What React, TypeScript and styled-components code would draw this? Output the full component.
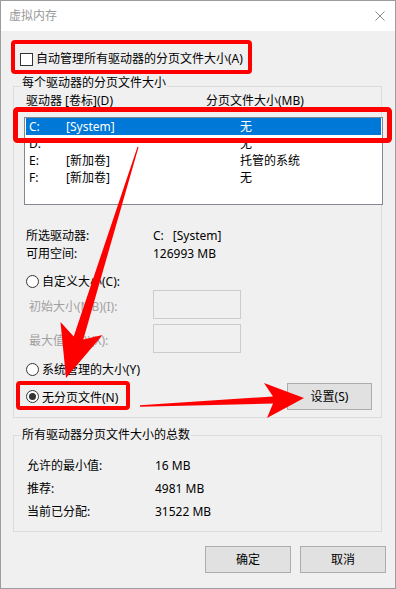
import React from "react";
import styled, { createGlobalStyle } from "styled-components";

const Global = createGlobalStyle`
  html, body { margin: 0; padding: 0; background: #ffffff; }
  body {
    font-family: "Noto Sans", "Noto Sans CJK SC", sans-serif;
    font-size: 12px;
    color: #000;
  }
  * { box-sizing: border-box; }
`;

const Window = styled.div`
  position: relative;
  width: 396px;
  height: 589px;
  border: 1px solid #9c9c9c;
  display: flex;
  flex-direction: column;
  background: #f0f0f0;
  overflow: hidden;
`;

const TitleBar = styled.div`
  flex: none;
  height: 30px;
  background: #ffffff;
  display: flex;
  align-items: center;
  justify-content: space-between;
  padding: 0 10px 0 8px;
`;

const Title = styled.span`
  color: #999999;
  line-height: 16px;
`;

const CloseIcon = styled.svg`
  display: block;
  width: 10px;
  height: 10px;
  margin-bottom: 1px;
`;

const Body = styled.div`
  flex: 1;
  display: flex;
  flex-direction: column;
  padding: 0 13px 0 12px;
`;

const CheckRow = styled.label`
  margin-top: 20px;
  height: 16px;
  padding-left: 7px;
  display: flex;
  align-items: center;
  gap: 3px;
  line-height: 16px;
`;

const CheckBox = styled.span`
  flex: none;
  width: 13px;
  height: 13px;
  border: 1px solid #333333;
  background: #ffffff;
`;

const Group = styled.div<{ $mt: number; $pt: number; $pb: number }>`
  position: relative;
  margin-top: ${(p) => p.$mt}px;
  padding-top: ${(p) => p.$pt}px;
  padding-bottom: ${(p) => p.$pb}px;
  border: 1px solid #dcdcdc;
  display: flex;
  flex-direction: column;
`;

const Legend = styled.span<{ $lift: number }>`
  position: absolute;
  left: 7px;
  top: -${(p) => p.$lift}px;
  padding: 0 1px;
  line-height: 16px;
  background: #f0f0f0;
  white-space: nowrap;
`;

const HeaderRow = styled.div`
  margin-top: 6px;
  padding-left: 12px;
  height: 16px;
  line-height: 16px;
  display: grid;
  grid-template-columns: 180px 1fr;
`;

const ListBox = styled.div`
  margin: 8px -2px 0 10px;
  height: 88px;
  border: 1px solid #828790;
  background: #ffffff;
  padding: 0 1px;
  display: flex;
  flex-direction: column;
`;

const ListRow = styled.div<{ $selected?: boolean }>`
  height: 17px;
  line-height: 17px;
  padding-left: 3px;
  display: grid;
  grid-template-columns: 37px 174px 1fr;
  white-space: nowrap;
  background: ${(p) => (p.$selected ? "#0078d7" : "transparent")};
  color: ${(p) => (p.$selected ? "#ffffff" : "#000000")};
`;

const InfoGrid = styled.div<{ $mt: number; $pl: number; $label: number; $row: number }>`
  margin-top: ${(p) => p.$mt}px;
  padding-left: ${(p) => p.$pl}px;
  display: grid;
  grid-template-columns: ${(p) => p.$label}px 1fr;
  grid-auto-rows: ${(p) => p.$row}px;
  line-height: ${(p) => p.$row}px;
  white-space: nowrap;
`;

const Spaced = styled.span`
  margin-left: 9px;
`;

const RadioRow = styled.label<{ $mt: number }>`
  margin-top: ${(p) => p.$mt}px;
  padding-left: 12px;
  height: 17px;
  line-height: 17px;
  display: flex;
  align-items: center;
  gap: 3px;
  white-space: nowrap;
`;

const Radio = styled.span<{ $checked?: boolean }>`
  flex: none;
  width: 13px;
  height: 13px;
  border-radius: 50%;
  border: 1px solid #333333;
  background: #ffffff;
  display: flex;
  align-items: center;
  justify-content: center;
  &::after {
    content: "";
    width: 7px;
    height: 7px;
    border-radius: 50%;
    background: ${(p) => (p.$checked ? "#333333" : "transparent")};
  }
`;

const FieldRow = styled.div<{ $mt: number }>`
  margin-top: ${(p) => p.$mt}px;
  padding-left: 15px;
  height: 29px;
  display: flex;
  align-items: center;
`;

const FieldLabel = styled.span`
  width: 124px;
  margin-top: 4px;
  line-height: 16px;
  color: #a0a0a0;
  white-space: nowrap;
`;

const FieldBox = styled.span`
  width: 88px;
  height: 29px;
  border: 1px solid #cccccc;
  background: #f0f0f0;
`;

const ActionRow = styled.div`
  margin-top: 5px;
  height: 27px;
  padding: 0 9px 0 12px;
  display: flex;
  align-items: center;
  gap: 3px;
`;

const Button = styled.button<{ $w: number }>`
  width: ${(p) => p.$w}px;
  height: 27px;
  padding: 0;
  border: 1px solid #adadad;
  background: #e1e1e1;
  font-family: inherit;
  font-size: 12px;
  color: #000;
  line-height: 16px;
`;

const PushRight = styled.span`
  margin-left: auto;
  display: flex;
`;

const Footer = styled.div`
  margin: 14px -4px 0 0;
  display: flex;
  justify-content: flex-end;
  gap: 9px;
`;

const Overlay = styled.svg`
  position: absolute;
  left: -1px;
  top: -1px;
  width: 396px;
  height: 589px;
  pointer-events: none;
`;

const RED = "#ff0000";

export default function App() {
  return (
    <>
      <Global />
      <Window>
        <TitleBar>
          <Title>虚拟内存</Title>
          <CloseIcon viewBox="0 0 10 10">
            <path d="M0.5 0.5 L9.5 9.5 M9.5 0.5 L0.5 9.5" stroke="#8a8a8a" strokeWidth="1" fill="none" />
          </CloseIcon>
        </TitleBar>
        <Body>
          <CheckRow>
            <CheckBox />
            <span>自动管理所有驱动器的分页文件大小(A)</span>
          </CheckRow>

          <Group $mt={19} $pt={0} $pb={7}>
            <Legend $lift={12}>每个驱动器的分页文件大小</Legend>
            <HeaderRow>
              <span>驱动器 [卷标](D)</span>
              <span>分页文件大小(MB)</span>
            </HeaderRow>
            <ListBox>
              <ListRow $selected>
                <span>C:</span>
                <span>[System]</span>
                <span>无</span>
              </ListRow>
              <ListRow>
                <span>D:</span>
                <span></span>
                <span>无</span>
              </ListRow>
              <ListRow>
                <span>E:</span>
                <span>[新加卷]</span>
                <span>托管的系统</span>
              </ListRow>
              <ListRow>
                <span>F:</span>
                <span>[新加卷]</span>
                <span>无</span>
              </ListRow>
            </ListBox>

            <InfoGrid $mt={22} $pl={12} $label={127} $row={18}>
              <span>所选驱动器:</span>
              <span>
                C:<Spaced>[System]</Spaced>
              </span>
              <span>可用空间:</span>
              <span>126993 MB</span>
            </InfoGrid>

            <RadioRow $mt={10}>
              <Radio />
              <span>自定义大小(C):</span>
            </RadioRow>
            <FieldRow $mt={0}>
              <FieldLabel>初始大小(MB)(I):</FieldLabel>
              <FieldBox />
            </FieldRow>
            <FieldRow $mt={5}>
              <FieldLabel>最大值(MB)(X):</FieldLabel>
              <FieldBox />
            </FieldRow>
            <RadioRow $mt={8}>
              <Radio />
              <span>系统管理的大小(Y)</span>
            </RadioRow>
            <ActionRow>
              <Radio $checked />
              <span>无分页文件(N)</span>
              <PushRight>
                <Button $w={85}>设置(S)</Button>
              </PushRight>
            </ActionRow>
          </Group>

          <Group $mt={17} $pt={18} $pb={8}>
            <Legend $lift={9}>所有驱动器分页文件大小的总数</Legend>
            <InfoGrid $mt={0} $pl={13} $label={128} $row={23}>
              <span>允许的最小值:</span>
              <span>16 MB</span>
              <span>推荐:</span>
              <span>4981 MB</span>
              <span>当前已分配:</span>
              <span>31522 MB</span>
            </InfoGrid>
          </Group>

          <Footer>
            <Button $w={86}>确定</Button>
            <Button $w={86}>取消</Button>
          </Footer>
        </Body>

        <Overlay viewBox="0 0 396 589">
          <rect x="13" y="42" width="237" height="30" rx="2" fill="none" stroke={RED} strokeWidth="4" />
          <rect x="15.5" y="109.5" width="374" height="31" rx="2" fill="none" stroke={RED} strokeWidth="5" />
          <rect x="18" y="383" width="110" height="25" rx="2" fill="none" stroke={RED} strokeWidth="4" />
          <polygon
            fill={RED}
            points="138.5,147.2 83.3,339.4 102.5,334.9 66,378 60.5,321.9 73.7,336.4 137.5,146.8"
          />
          <polygon
            fill={RED}
            points="140,405.3 273,396.5 264,383 304,398 267,418 273,403.5 140,406.8"
          />
        </Overlay>
      </Window>
    </>
  );
}
